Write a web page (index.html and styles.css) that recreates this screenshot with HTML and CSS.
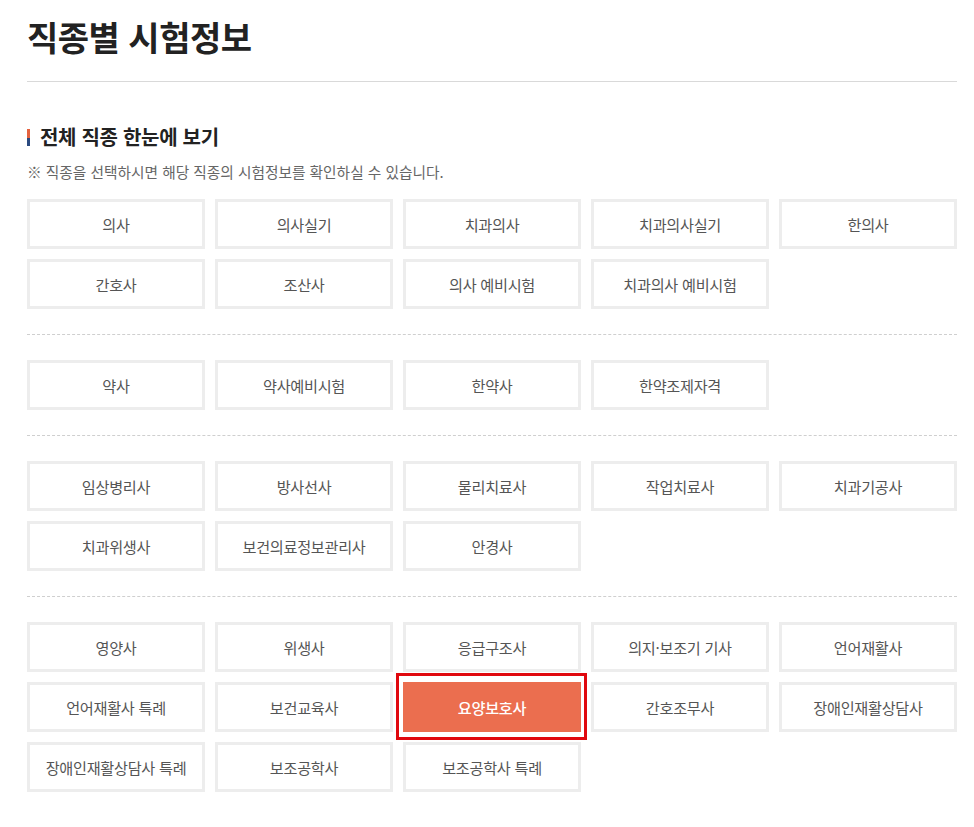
FILE: index.html
```html
<!DOCTYPE html>
<html lang="ko">
<head>
<meta charset="utf-8">
<link rel="stylesheet" href="styles.css">
</head>
<body>
<div class="page">
  <h1 class="title">직종별 시험정보</h1>
  <div class="section">
    <h2 class="sec-title">전체 직종 한눈에 보기</h2>
    <p class="note">※ 직종을 선택하시면 해당 직종의 시험정보를 확인하실 수 있습니다.</p>
    <div class="grid first">
      <a class="btn">의사</a><a class="btn">의사실기</a><a class="btn">치과의사</a><a class="btn">치과의사실기</a><a class="btn">한의사</a>
      <a class="btn">간호사</a><a class="btn">조산사</a><a class="btn">의사 예비시험</a><a class="btn">치과의사 예비시험</a>
    </div>
    <div class="grid">
      <a class="btn">약사</a><a class="btn">약사예비시험</a><a class="btn">한약사</a><a class="btn">한약조제자격</a>
    </div>
    <div class="grid">
      <a class="btn">임상병리사</a><a class="btn">방사선사</a><a class="btn">물리치료사</a><a class="btn">작업치료사</a><a class="btn">치과기공사</a>
      <a class="btn">치과위생사</a><a class="btn">보건의료정보관리사</a><a class="btn">안경사</a>
    </div>
    <div class="grid last">
      <a class="btn">영양사</a><a class="btn">위생사</a><a class="btn">응급구조사</a><a class="btn">의지·보조기 기사</a><a class="btn">언어재활사</a>
      <a class="btn">언어재활사 특례</a><a class="btn">보건교육사</a><a class="btn active">요양보호사</a><a class="btn">간호조무사</a><a class="btn">장애인재활상담사</a>
      <a class="btn">장애인재활상담사 특례</a><a class="btn">보조공학사</a><a class="btn">보조공학사 특례</a>
    </div>
  </div>
</div>
</body>
</html>
```
FILE: styles.css
```css
* { box-sizing: border-box; }
body {
  margin: 0;
  background: #fff;
  font-family: "Noto Sans CJK KR", "Noto Sans", sans-serif;
  color: #222;
}
.page {
  width: 930px;
  margin-left: 27px;
}
.title {
  margin: 0;
  padding-top: 14px;
  height: 82px;
  font-size: 34px;
  line-height: 46px;
  font-weight: 700;
  color: #222;
  letter-spacing: -0.5px;
  border-bottom: 1px solid #d9d9d9;
}
.section {
  padding-top: 42px;
}
.sec-title {
  margin: 0;
  font-size: 20px;
  line-height: 26px;
  font-weight: 700;
  color: #222;
  padding-left: 13px;
  position: relative;
  letter-spacing: -0.3px;
}
.sec-title::before {
  content: "";
  position: absolute;
  left: 0;
  top: 5px;
  width: 3px;
  height: 17px;
  background: linear-gradient(to bottom, #e4623f 0 50%, #2b4a80 50% 100%);
}
.note {
  margin: 12px 0 0;
  font-size: 14.7px;
  line-height: 20px;
  color: #666;
}
.grid {
  display: grid;
  grid-template-columns: repeat(5, 178px);
  gap: 10px;
  padding: 25px 0;
  border-bottom: 1px dashed #cfcfcf;
}
.grid.first { padding-top: 17px; }
.grid.last { border-bottom: none; }
.btn {
  height: 50px;
  border: 3px solid #ededed;
  display: flex;
  align-items: center;
  justify-content: center;
  font-size: 15.2px;
  color: #555;
  background: #fff;
  position: relative;
  letter-spacing: -0.3px;
}
.btn.active {
  background: #eb6e4f;
  border-color: #eb6e4f;
  color: #fff;
  font-weight: 500;
}
.btn.active::after {
  content: "";
  position: absolute;
  left: -10px;
  top: -12px;
  right: -9px;
  bottom: -11px;
  border: 3px solid #e0080e;
}
```
